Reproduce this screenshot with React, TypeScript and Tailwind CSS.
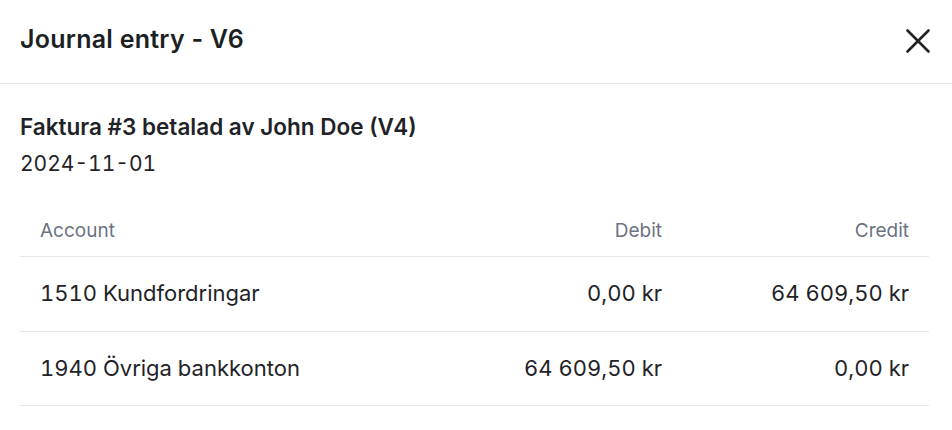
const rows = [
  { account: '1510 Kundfordringar', debit: '0,00 kr', credit: '64 609,50 kr' },
  { account: '1940 Övriga bankkonton', debit: '64 609,50 kr', credit: '0,00 kr' },
]

export default function App() {
  return (
    <div className="w-[952px] h-[430px] bg-white text-[#1f2328] font-['Inter',sans-serif] overflow-hidden">
      <div className="flex items-center justify-between h-[84px] pl-5 pr-[22px] pb-[3px] border-b border-[#e5e7eb]">
        <h1 className="text-[25px] font-semibold tracking-[0.01em] text-[#1c1f23]">Journal entry - V6</h1>
        <button className="w-6 h-6 mt-[2px] flex items-center justify-center text-[#222]" aria-label="Close">
          <svg width="24" height="24" viewBox="0 0 24 24" fill="none" stroke="currentColor" strokeWidth="2.6" strokeLinecap="round">
            <path d="M1.5 1.5 22.5 22.5M22.5 1.5 1.5 22.5" />
          </svg>
        </button>
      </div>

      <div className="pl-5 pr-[23px] pt-[26px]">
        <div className="text-[22.5px] font-semibold leading-[34px]">Faktura #3 betalad av John Doe (V4)</div>
        <div className="text-[21px] leading-[34px] mt-[3px] tabular-nums">2024-11-01</div>

        <div className="mt-[26px]">
          <div className="grid grid-cols-[1fr_247px_247px] h-[50px] items-center border-b border-[#e5e7eb] text-[19px] text-[#6b7280]">
            <div className="px-5">Account</div>
            <div className="px-5 text-right">Debit</div>
            <div className="px-5 text-right">Credit</div>
          </div>
          {rows.map((r) => (
            <div
              key={r.account}
              className="grid grid-cols-[1fr_247px_247px] h-[74.5px] items-center border-b border-[#e5e7eb] text-[22px] tabular-nums"
            >
              <div className="px-5">{r.account}</div>
              <div className="px-5 text-right">{r.debit}</div>
              <div className="px-5 text-right">{r.credit}</div>
            </div>
          ))}
        </div>
      </div>
    </div>
  )
}
